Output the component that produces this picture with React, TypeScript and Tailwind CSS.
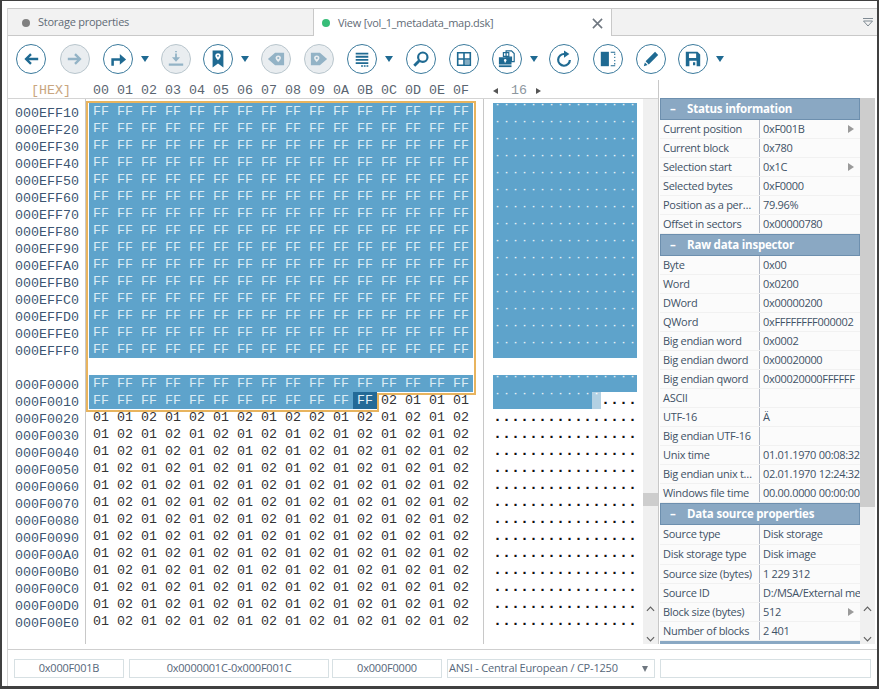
import React from 'react';

const BYTE_HEADERS = ['00','01','02','03','04','05','06','07','08','09','0A','0B','0C','0D','0E','0F'];
const UPPER_ADDR = ['000EFF10','000EFF20','000EFF30','000EFF40','000EFF50','000EFF60','000EFF70','000EFF80','000EFF90','000EFFA0','000EFFB0','000EFFC0','000EFFD0','000EFFE0','000EFFF0'];
const LOWER_ADDR = ['000F0000','000F0010','000F0020','000F0030','000F0040','000F0050','000F0060','000F0070','000F0080','000F0090','000F00A0','000F00B0','000F00C0','000F00D0','000F00E0'];
const FF_ROW = Array(16).fill('FF');
const ALT_ROW = ['01','02','01','02','01','02','01','02','01','02','01','02','01','02','01','02'];
const ROW_F0020 = ['01','01','02','01','02','01','02','01','02','02','01','02','01','02','01','02'];
const ROW_F0010 = ['FF','FF','FF','FF','FF','FF','FF','FF','FF','FF','FF','FF','02','01','01','01'];

const mono = "font-['Liberation_Mono',monospace]";
const ui = "font-['Open_Sans',sans-serif]";

const BLUE = '#1f6a92';
const GRAY = '#93b3c6';

// toolbar glyphs, all on a 20x20 box
const icons: Record<string, React.ReactNode> = {
  back: <path d="M18 10H5M10 4.500 4.500 10l5.500 5.500" fill="none" stroke={BLUE} strokeWidth="2.600" />,
  forward: <path d="M2 10h13M10 4.500l5.500 5.500-5.500 5.500" fill="none" stroke={GRAY} strokeWidth="2.600" />,
  redo: <><path d="M4 17.500v-7h9" fill="none" stroke={BLUE} strokeWidth="2.800" /><path d="M12 4.500l7 6-7 6z" fill={BLUE} /></>,
  download: <><path d="M10 1v1.500M10 4v5" stroke={GRAY} strokeWidth="2" /><path d="M5.500 8h9L10 13z" fill={GRAY} /><path d="M2 15h16v2.500H2z" fill={GRAY} /></>,
  bookmark: <path fillRule="evenodd" d="M4 0.500h12v19l-6-4.500-6 4.500zM10 3.500a3 3 0 0 0-3 3c0 2 3 5 3 5s3-3 3-5a3 3 0 0 0-3-3zm0 2a1 1 0 1 1 0 2 1 1 0 0 1 0-2z" fill={BLUE} />,
  tagLeft: <><path fillRule="evenodd" d="M1 10l8-7h10v14H9zM12.500 6a3 3 0 0 0-3 3c0 1.500 3 4.500 3 4.500s3-3 3-4.500a3 3 0 0 0-3-3z" fill={GRAY} /><circle cx="12.500" cy="9" r="1.200" fill={GRAY} /></>,
  tagRight: <><path fillRule="evenodd" d="M19 10l-8-7H1v14h10zM7.500 6a3 3 0 0 0-3 3c0 1.500 3 4.500 3 4.500s3-3 3-4.500a3 3 0 0 0-3-3z" fill={GRAY} /><circle cx="7.500" cy="9" r="1.200" fill={GRAY} /></>,
  list: <path d="M3 3h14v2H3zM3 6.500h14v2H3zM3 10h14v2H3zM3 13.500h14v2H3zM9 17h2v1.500H9zM12 17h2v1.500h-2zM15 17h2v1.500h-2z" fill={BLUE} />,
  search: <><circle cx="12" cy="8" r="5.200" fill="none" stroke={BLUE} strokeWidth="2.400" /><path d="M8 12l-5.500 5.500" stroke={BLUE} strokeWidth="3.200" /></>,
  grid: <><path d="M3 3h14v14H3zM10 3v14M3 10h14" fill="none" stroke={BLUE} strokeWidth="1.800" /><path d="M11 11h5v5h-5z" fill={BLUE} opacity="0.550" /></>,
  lock: <><path d="M9 1h6l3 3v9h-3V8H9z" fill="none" stroke={BLUE} strokeWidth="1.300" /><path d="M6 3h6v4H6z" fill="none" stroke={BLUE} strokeWidth="1.300" /><path fillRule="evenodd" d="M1 8h14v8H1zM8 10a1.500 1.500 0 0 0-.7 2.800V14h1.400v-1.200A1.500 1.500 0 0 0 8 10z" fill={BLUE} /><path d="M1 17h14v2H1z" fill={BLUE} /></>,
  refresh: <><path d="M10.500 4.500A6.500 6.500 0 1 0 16.500 11" fill="none" stroke={BLUE} strokeWidth="2.400" /><path d="M10 0.500l6 4-6 4z" fill={BLUE} /></>,
  panel: <><path d="M2 2h9v16H2z" fill={BLUE} /><path d="M13 2.500h5M13 17.500h5M17.500 4v1.500M17.500 7.500V9M17.500 11v1.500M17.500 14.500V16" stroke={BLUE} strokeWidth="1.200" fill="none" /></>,
  pencil: <><path d="M14.500 2l3.500 3.500L7.500 16l-3.500-3.500z" fill={BLUE} /><path d="M3.200 13.800l3 3L2 18z" fill={BLUE} /></>,
  save: <path fillRule="evenodd" d="M2 2h13l3 3v13H2zM5.500 4v5h8V4zM6 12v6h8v-6zM10 13.500h2.500V17H10z" fill={BLUE} />,
};

const tools = [
  { icon: 'back', cls: 'ml-[8px]' },
  { icon: 'forward', cls: 'ml-[14px]', off: true },
  { icon: 'redo', cls: 'ml-[13px]', menu: true },
  { icon: 'download', cls: 'ml-[12px]', off: true },
  { icon: 'bookmark', cls: 'ml-[12px]', menu: true },
  { icon: 'tagLeft', cls: 'ml-[12px]', off: true },
  { icon: 'tagRight', cls: 'ml-[13px]', off: true },
  { icon: 'list', cls: 'ml-[13px]', menu: true },
  { icon: 'search', cls: 'ml-[13px]' },
  { icon: 'grid', cls: 'ml-[13px]' },
  { icon: 'lock', cls: 'ml-[13px]', menu: true },
  { icon: 'refresh', cls: 'ml-[11px]' },
  { icon: 'panel', cls: 'ml-[14px]' },
  { icon: 'pencil', cls: 'ml-[13px]' },
  { icon: 'save', cls: 'ml-[12px]', menu: true },
];

const ToolButton = ({ icon, cls, off, menu }: { icon: string; cls: string; off?: boolean; menu?: boolean }) => (
  <div className={`flex items-center ${cls}`}>
    <div className={`flex h-[30px] w-[30px] items-center justify-center rounded-full border ${off ? 'border-[#b9c6cd] bg-[#e9edf0]' : 'border-[#3b7a9c] bg-white'}`}>
      <svg viewBox="0 0 20 20" className="h-[18px] w-[18px]">{icons[icon]}</svg>
    </div>
    {menu && <div className="ml-[8px] h-0 w-0 border-x-[4.500px] border-t-[6px] border-x-transparent border-t-[#1f6a92]" />}
  </div>
);

const ScrollArrows = () => (
  <div className="absolute bottom-[2px] left-0 flex h-[36px] w-full flex-col items-center justify-between">
    <svg viewBox="0 0 10 6" className="h-[6px] w-[9px]"><path d="M1 5l4-4 4 4" fill="none" stroke="#606060" strokeWidth="1.300" /></svg>
    <svg viewBox="0 0 10 6" className="h-[6px] w-[9px]"><path d="M1 1l4 4 4-4" fill="none" stroke="#606060" strokeWidth="1.300" /></svg>
  </div>
);

const HexRow = ({ bytes, band, current }: { bytes: string[]; band: number; current?: number }) => (
  <div className="flex h-[17px]">
    {bytes.map((b, i) => (
      <div
        key={i}
        className={`flex h-[17px] w-[24px] justify-center leading-[17px] ${i === current ? 'bg-[#246a97] text-[#e6f1f7]' : i < band ? 'bg-[#5ea3cb] text-[#dcecf5]' : 'text-[#333333]'}`}
      >
        {b}
      </div>
    ))}
  </div>
);

const AsciiRow = ({ band, current }: { band: number; current?: number }) => (
  <div className="flex h-[17px]">
    {Array.from({ length: 16 }).map((_, i) => (
      <div
        key={i}
        className={`h-[17px] w-[9px] text-center leading-[17px] ${i === current ? 'bg-[#b3d1e3] text-[#ffffff]' : i < band ? 'bg-[#5ea3cb] text-[#e4f0f7]' : 'font-bold text-[#111111]'}`}
      >
        {i < band || i === current ? '˙' : '.'}
      </div>
    ))}
  </div>
);

const SectionHead = ({ title }: { title: string }) => (
  <div className="flex h-[22px] shrink-0 items-center border border-[#6d8fae] bg-[#8aa8c3] pl-[9px] text-[11.500px] font-bold tracking-[-0.2px] text-white">
    <span className="w-[17px] leading-none">–</span>
    {title}
  </div>
);

const PropRow = ({ name, value, arrow, tall }: { name: string; value?: string; arrow?: boolean; tall?: boolean }) => (
  <div className={`flex ${tall ? 'h-[20px]' : 'h-[19px]'} border-b border-[#f1f1f1] bg-[#fbfbfb] text-[11px] leading-[18px] tracking-[-0.3px] text-[#3f5266]`}>
    <div className="w-[99px] shrink-0 overflow-hidden whitespace-nowrap pl-[3px]">{name}</div>
    <div className="relative flex-1 overflow-hidden whitespace-nowrap border-l border-[#b5bbc8] pl-[3px]">
      {value}
      {arrow && <div className="absolute right-[6px] top-[5px] h-0 w-0 border-y-[4px] border-l-[6px] border-y-transparent border-l-[#9a9a9a]" />}
    </div>
  </div>
);

const StatusBox = ({ cls, children }: { cls: string; children?: React.ReactNode }) => (
  <div className={`flex h-[19px] items-center justify-center border border-[#d7e0e3] text-[11px] tracking-[-0.2px] text-[#56677a] ${cls}`}>{children}</div>
);

export default function App() {
  return (
    <div className={`flex h-[689px] w-[879px] flex-col overflow-hidden border-b-[3px] border-l-[2px] border-r-[2px] border-t border-[#404040] bg-white pt-[7px] pl-[5px] ${ui}`}>
      <div className="flex min-h-0 flex-1 flex-col border-l border-[#d4d4d4]">
        {/* Tabs */}
        <div className="flex h-[28px] shrink-0 border-t border-[#c9c9c9] bg-[#f2f2f2] text-[11px] tracking-[-0.25px] text-[#5f6b76]">
          <div className="flex w-[305px] items-center border-b border-[#c9c9c9] pl-[14px] pt-[1px]">
            <span className="mr-[8px] h-[8px] w-[8px] rounded-full bg-[#808080]" />
            Storage properties
          </div>
          <div className="flex w-[299px] items-center border-x border-[#c9c9c9] bg-white pl-[8px] pt-[1px]">
            <span className="mr-[8px] h-[8px] w-[8px] rounded-full bg-[#37bd78]" />
            <span>View [vol_1_metadata_map.dsk]</span>
            <svg viewBox="0 0 12 12" className="ml-auto mr-[8px] h-[11px] w-[11px]"><path d="M1 1l10 10M11 1L1 11" stroke="#6f7780" strokeWidth="1.700" /></svg>
          </div>
          <div className="flex flex-1 items-center justify-end border-b border-[#c9c9c9] pr-[3px]">
            <svg viewBox="0 0 12 10" className="h-[10px] w-[12px]"><path d="M1 1.500h10M1.500 4h9L6 9z" fill="none" stroke="#7f8a93" strokeWidth="1" /></svg>
          </div>
        </div>

        {/* Toolbar */}
        <div className="flex h-[44px] shrink-0 items-center pt-[2px]">
          {tools.map((t) => (
            <ToolButton key={t.icon} {...t} />
          ))}
        </div>

        <div className="flex min-h-0 flex-1 border-b border-[#cfcfcf] pb-[5px]">
          {/* Hex view */}
          <div className="flex w-[651px] shrink-0 flex-col border-r border-[#c8c8c8]">
            <div className={`flex h-[19px] shrink-0 items-center border-b border-[#d4d4d4] pt-[3px] text-[13.330px] ${mono}`}>
              <div className="w-[81px] pl-[23px] text-[#c9a680]">[HEX]</div>
              {BYTE_HEADERS.map((h) => (
                <div key={h} className="w-[24px] text-center text-[#5a6570]">{h}</div>
              ))}
              <div className="ml-[20px] flex items-center text-[#8d979f]">
                <span className="h-0 w-0 border-y-[3.500px] border-r-[5px] border-y-transparent border-r-[#555555]" />
                <span className="ml-[13px] mr-[9px]">16</span>
                <span className="h-0 w-0 border-y-[3.500px] border-l-[5px] border-y-transparent border-l-[#555555]" />
              </div>
            </div>
            <div className="relative flex min-h-0 flex-1">
              {/* Addresses */}
              <div className={`w-[78px] shrink-0 border-r border-[#c8c8c8] pl-[7px] pt-[6px] text-[13.330px] leading-[17px] text-[#3c5672] ${mono}`}>
                {UPPER_ADDR.map((a) => <div key={a} className="h-[17px]">{a}</div>)}
                <div className="h-[17px]" />
                {LOWER_ADDR.map((a) => <div key={a} className="h-[17px]">{a}</div>)}
              </div>
              {/* Bytes */}
              <div className={`relative w-[398px] shrink-0 border-r border-[#c8c8c8] pl-[3px] pt-[4px] text-[13.330px] ${mono}`}>
                {UPPER_ADDR.map((a) => <HexRow key={a} bytes={FF_ROW} band={16} />)}
                <div className="h-[17px]" />
                <HexRow bytes={FF_ROW} band={16} />
                <HexRow bytes={ROW_F0010} band={11} current={11} />
                <HexRow bytes={ROW_F0020} band={0} />
                {LOWER_ADDR.slice(3).map((a) => <HexRow key={a} bytes={ALT_ROW} band={0} />)}
                {/* Selection outline */}
                <div className="absolute left-0 top-[2px] h-[2px] w-[390px] bg-[#e8b45e]" />
                <div className="absolute left-0 top-[2px] h-[311px] w-[2px] bg-[#e8b45e]" />
                <div className="absolute left-[388px] top-[2px] h-[294px] w-[2px] bg-[#e8b45e]" />
                <div className="absolute left-[291px] top-[294px] h-[2px] w-[99px] bg-[#e8b45e]" />
                <div className="absolute left-[291px] top-[294px] h-[19px] w-[2px] bg-[#e8b45e]" />
                <div className="absolute left-0 top-[311px] h-[2px] w-[293px] bg-[#e8b45e]" />
              </div>
              {/* Text column */}
              <div className={`w-[159px] shrink-0 pl-[9px] pt-[4px] text-[15px] ${mono}`}>
                {UPPER_ADDR.map((a) => <AsciiRow key={a} band={16} />)}
                <div className="h-[17px]" />
                <AsciiRow band={16} />
                <AsciiRow band={11} current={11} />
                {LOWER_ADDR.slice(2).map((a) => <AsciiRow key={a} band={0} />)}
              </div>
              {/* Scrollbar */}
              <div className="relative flex-1 bg-[#f0f0f0] pt-[394px]">
                <div className="h-[13px] bg-[#cdcdcd]" />
                <ScrollArrows />
              </div>
            </div>
          </div>

          {/* Properties */}
          <div className="flex min-w-0 flex-1 flex-col pt-[18px]">
            <div className="flex min-h-0 flex-1">
              <div className="ml-[1px] w-[200px] shrink-0 overflow-hidden">
                <SectionHead title="Status information" />
                <PropRow name="Current position" value="0xF001B" arrow />
                <PropRow name="Current block" value="0x780" />
                <PropRow name="Selection start" value="0x1C" arrow />
                <PropRow name="Selected bytes" value="0xF0000" />
                <PropRow name="Position as a per…" value="79.96%" />
                <PropRow name="Offset in sectors" value="0x00000780" />
                <SectionHead title="Raw data inspector" />
                <PropRow name="Byte" value="0x00" />
                <PropRow name="Word" value="0x0200" />
                <PropRow name="DWord" value="0x00000200" />
                <PropRow name="QWord" value="0xFFFFFFFF000002" />
                <PropRow name="Big endian word" value="0x0002" />
                <PropRow name="Big endian dword" value="0x00020000" />
                <PropRow name="Big endian qword" value="0x00020000FFFFFF" />
                <PropRow name="ASCII" />
                <PropRow name="UTF-16" value="Ä" />
                <PropRow name="Big endian UTF-16" />
                <PropRow name="Unix time" value="01.01.1970 00:08:32" />
                <PropRow name="Big endian unix t…" value="02.01.1970 12:24:32" />
                <PropRow name="Windows file time" value="00.00.0000 00:00:00" />
                <SectionHead title="Data source properties" />
                <PropRow name="Source type" value="Disk storage" tall />
                <PropRow name="Disk storage type" value="Disk image" tall />
                <PropRow name="Source size (bytes)" value="1 229 312" />
                <PropRow name="Source ID" value="D:/MSA/External media" />
                <PropRow name="Block size (bytes)" value="512" arrow />
                <PropRow name="Number of blocks" value="2 401" />
                <div className="h-[4px] bg-[#8aa8c3]" />
              </div>
              <div className="relative w-[15px] shrink-0 bg-[#f0f0f0]">
                <div className="h-[409px] bg-[#cdcdcd]" />
                <ScrollArrows />
              </div>
            </div>
          </div>
        </div>

        {/* Status bar */}
        <div className="flex h-[36px] shrink-0 items-start pt-[9px]">
          <StatusBox cls="ml-[6px] w-[110px]">0x000F001B</StatusBox>
          <StatusBox cls="ml-[5px] w-[200px]">0x0000001C-0x000F001C</StatusBox>
          <StatusBox cls="ml-[3px] w-[110px]">0x000F0000</StatusBox>
          <StatusBox cls="relative ml-[5px] w-[208px] !justify-start pl-[1px]">
            ANSI - Central European / CP-1250
            <div className="absolute right-[6px] top-[6px] h-0 w-0 border-x-[3.500px] border-t-[6px] border-x-transparent border-t-[#6f7780]" />
          </StatusBox>
          <StatusBox cls="ml-[5px] w-[211px]" />
        </div>
      </div>
    </div>
  );
}
